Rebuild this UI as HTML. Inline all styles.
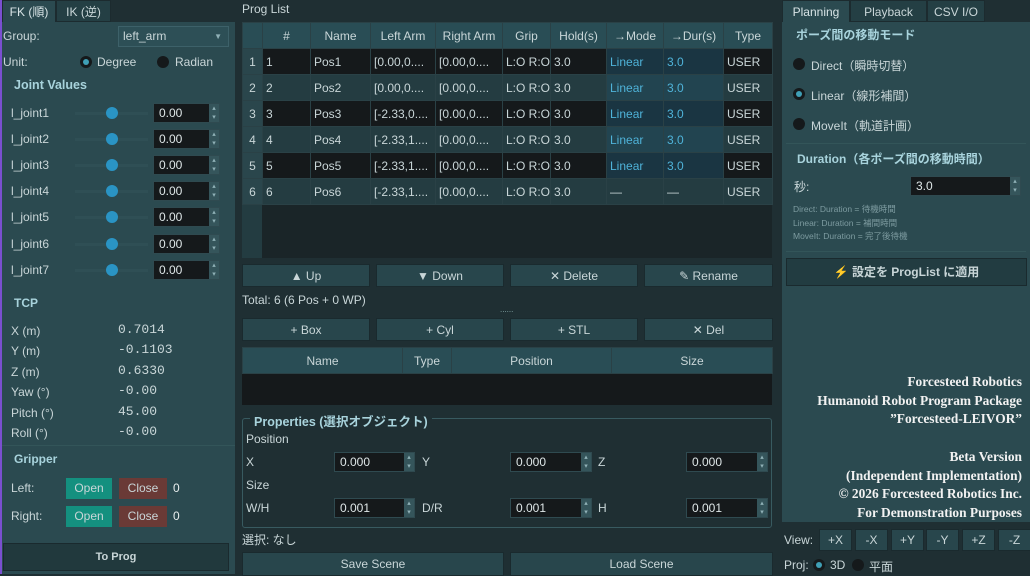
<!DOCTYPE html>
<html><head><meta charset="utf-8"><style>
*{box-sizing:border-box;margin:0;padding:0}
body{width:1030px;height:574px;overflow:hidden;background:#1f2f33;font-family:"Liberation Sans","Noto Sans CJK JP",sans-serif;font-size:12px;color:#c9d6d8;position:relative}
.a{position:absolute;white-space:nowrap}
.panel{background:#2b4a50}
.tab{position:absolute;top:0;height:22px;line-height:22px;text-align:center;font-size:12px;border:1px solid #1c2b2f}
.spin{position:absolute;background:#15191b;border:1px solid #2f4a50;height:20px;line-height:18px;padding-left:5px;color:#dfe7e8;font-size:12px}
.spin:after{content:"";position:absolute;right:0;top:0;width:10px;height:18px;background:#35555b}
.spin:before{content:"▴\A▾";white-space:pre;position:absolute;right:1px;top:0;width:8px;font-size:7px;line-height:9px;color:#8fb0b6;z-index:1;text-align:center}
.btn{position:absolute;background:#28464c;border:1px solid #1a2a2e;text-align:center;color:#c9d6d8;font-size:12px}
.h{color:#a8d3dc;font-weight:bold;font-size:12px}
.dot{position:absolute;width:12px;height:12px;border-radius:6px;background:#15191b}
.dot.on:after{content:"";position:absolute;left:3px;top:3px;width:6px;height:6px;border-radius:3px;background:#3f9fb5}
.knob{position:absolute;width:12px;height:12px;border-radius:6px;background:#2a94c4}
.track{position:absolute;height:3px;background:#2f4f55}
table{border-collapse:collapse;position:absolute;font-size:12px}
td{border:1px solid #2a4146;padding:0 3px;height:26px;white-space:nowrap;overflow:hidden}
.serif{font-family:"Liberation Serif",serif;font-weight:bold;color:#f2f2f2;font-size:13.4px;text-align:right;right:8px}
</style></head><body>
<div class="a" style="left:0;top:0;width:2px;height:574px;background:#7a4fd0"></div>
<!-- Left panel -->
<div class="a panel" style="left:2px;top:22px;width:233px;height:552px"></div>
<div class="tab panel" style="left:2px;width:54px;color:#d8e4e6;border-bottom:none">FK (順)</div>
<div class="tab" style="left:56px;width:55px;background:#243f44">IK (逆)</div>
<div class="a" style="left:3px;top:29px">Group:</div>
<div class="a" style="left:118px;top:26px;width:111px;height:21px;background:#2d4f56;border:1px solid #3d6169;padding-left:4px;line-height:19px">left_arm<span style="position:absolute;right:6px;top:0;font-size:8px;color:#8fb0b6">▼</span></div>
<div class="a" style="left:3px;top:55px">Unit:</div>
<div class="dot on" style="left:80px;top:56px"></div><div class="a" style="left:97px;top:55px">Degree</div>
<div class="dot" style="left:157px;top:56px"></div><div class="a" style="left:175px;top:55px">Radian</div>
<div class="a h" style="left:14px;top:78px;font-size:12.5px">Joint Values</div>
<div id="joints"></div>
<div class="a h" style="left:14px;top:296px">TCP</div>
<div class="a" style="left:11px;top:321px;line-height:20.4px">X (m)<br>Y (m)<br>Z (m)<br>Yaw (°)<br>Pitch (°)<br>Roll (°)</div>
<div class="a" style="left:118px;top:320px;line-height:20.4px;font-family:'Liberation Mono',monospace;font-size:13px">0.7014<br>-0.1103<br>0.6330<br>-0.00<br>45.00<br>-0.00</div>
<div class="a" style="left:2px;top:445px;width:233px;height:1px;background:#335559"></div>
<div class="a h" style="left:14px;top:452px">Gripper</div>
<div class="a" style="left:11px;top:481px">Left:</div>
<div class="a" style="left:11px;top:509px">Right:</div>
<div class="btn" style="left:66px;top:478px;width:46px;height:21px;line-height:20px;background:#14907f;border:none">Open</div>
<div class="btn" style="left:119px;top:478px;width:48px;height:21px;line-height:20px;background:#6a3a36;border:none">Close</div>
<div class="a" style="left:173px;top:481px;color:#e8eeee">0</div>
<div class="btn" style="left:66px;top:506px;width:46px;height:21px;line-height:20px;background:#14907f;border:none">Open</div>
<div class="btn" style="left:119px;top:506px;width:48px;height:21px;line-height:20px;background:#6a3a36;border:none">Close</div>
<div class="a" style="left:173px;top:509px;color:#e8eeee">0</div>
<div class="btn" style="left:3px;top:543px;width:226px;height:28px;line-height:27px;background:#21393d;font-weight:bold;font-size:11px">To Prog</div>
<div class="a" style="left:235px;top:22px;width:5px;height:552px;background:#1f2f33"></div>

<!-- Center -->
<div class="a" style="left:242px;top:2px">Prog List</div>
<div class="a" style="left:242px;top:22px;width:530px;height:236px;background:#1a2528"></div>
<div class="a" style="left:242px;top:22px;width:20px;height:236px;background:#233c41"></div>
<table style="left:242px;top:22px;width:530px;table-layout:fixed">
<colgroup><col style="width:20px"><col style="width:48px"><col style="width:60px"><col style="width:65px"><col style="width:67px"><col style="width:48px"><col style="width:56px"><col style="width:57px"><col style="width:60px"><col style="width:49px"></colgroup>
<tr style="background:#294d55;color:#c9d6d8;text-align:center"><td></td><td>#</td><td>Name</td><td>Left Arm</td><td>Right Arm</td><td>Grip</td><td>Hold(s)</td><td>→Mode</td><td>→Dur(s)</td><td>Type</td></tr>
<tbody id="rows"></tbody>
</table>
<div class="btn" style="left:242px;top:264px;width:128px;height:23px;line-height:22px">▲ Up</div>
<div class="btn" style="left:376px;top:264px;width:128px;height:23px;line-height:22px">▼ Down</div>
<div class="btn" style="left:510px;top:264px;width:128px;height:23px;line-height:22px">✕ Delete</div>
<div class="btn" style="left:644px;top:264px;width:129px;height:23px;line-height:22px">✎ Rename</div>
<div class="a" style="left:242px;top:293px">Total: 6 (6 Pos + 0 WP)</div>
<div class="a" style="left:500px;top:305px;font-size:8px;color:#8aa">......</div>
<div class="btn" style="left:242px;top:318px;width:128px;height:23px;line-height:22px">+ Box</div>
<div class="btn" style="left:376px;top:318px;width:128px;height:23px;line-height:22px">+ Cyl</div>
<div class="btn" style="left:510px;top:318px;width:128px;height:23px;line-height:22px">+ STL</div>
<div class="btn" style="left:644px;top:318px;width:129px;height:23px;line-height:22px">✕ Del</div>
<div class="a" style="left:242px;top:347px;width:530px;height:58px;background:#15191b"></div>
<table style="left:242px;top:347px;width:530px;table-layout:fixed"><colgroup><col style="width:160px"><col style="width:49px"><col style="width:160px"><col style="width:161px"></colgroup>
<tr style="background:#294d55;text-align:center"><td>Name</td><td>Type</td><td>Position</td><td>Size</td></tr></table>
<div class="a" style="left:242px;top:418px;width:530px;height:110px;border:1px solid #385a60;border-radius:3px"></div>
<div class="a h" style="left:250px;top:411px;background:#1f2f33;padding:0 4px;font-size:12.5px">Properties (選択オブジェクト)</div>
<div class="a" style="left:246px;top:432px">Position</div>
<div class="a" style="left:246px;top:455px">X</div><div class="a" style="left:422px;top:455px">Y</div><div class="a" style="left:598px;top:455px">Z</div>
<div class="spin" style="left:334px;top:452px;width:81px">0.000</div>
<div class="spin" style="left:510px;top:452px;width:82px">0.000</div>
<div class="spin" style="left:686px;top:452px;width:82px">0.000</div>
<div class="a" style="left:246px;top:478px">Size</div>
<div class="a" style="left:246px;top:501px">W/H</div><div class="a" style="left:422px;top:501px">D/R</div><div class="a" style="left:598px;top:501px">H</div>
<div class="spin" style="left:334px;top:498px;width:81px">0.001</div>
<div class="spin" style="left:510px;top:498px;width:82px">0.001</div>
<div class="spin" style="left:686px;top:498px;width:82px">0.001</div>
<div class="a" style="left:242px;top:531px">選択: なし</div>
<div class="btn" style="left:242px;top:552px;width:262px;height:24px;line-height:23px">Save Scene</div>
<div class="btn" style="left:510px;top:552px;width:263px;height:24px;line-height:23px">Load Scene</div>

<!-- Right -->
<div class="a panel" style="left:782px;top:22px;width:248px;height:500px"></div>
<div class="tab panel" style="left:782px;width:68px;border-bottom:none;color:#d8e4e6">Planning</div>
<div class="tab" style="left:850px;width:77px;background:#243f44">Playback</div>
<div class="tab" style="left:927px;width:58px;background:#243f44">CSV I/O</div>
<div class="a h" style="left:796px;top:26px">ポーズ間の移動モード</div>
<div class="dot" style="left:793px;top:58px"></div><div class="a" style="left:811px;top:57px">Direct（瞬時切替）</div>
<div class="dot on" style="left:793px;top:88px"></div><div class="a" style="left:811px;top:87px">Linear（線形補間）</div>
<div class="dot" style="left:793px;top:118px"></div><div class="a" style="left:811px;top:117px">MoveIt（軌道計画）</div>
<div class="a" style="left:786px;top:143px;width:240px;height:1px;background:#335559"></div>
<div class="a h" style="left:797px;top:150px">Duration（各ポーズ間の移動時間）</div>
<div class="a" style="left:794px;top:178px">秒:</div>
<div class="spin" style="left:910px;top:176px;width:111px">3.0</div>
<div class="a" style="left:793px;top:203px;font-size:8.5px;line-height:13.5px;color:#7d9ba0">Direct: Duration = 待機時間<br>Linear: Duration = 補間時間<br>MoveIt: Duration = 完了後待機</div>
<div class="a" style="left:786px;top:251px;width:240px;height:1px;background:#335559"></div>
<div class="btn" style="left:786px;top:258px;width:241px;height:28px;line-height:27px;background:#223c41;font-weight:bold">⚡ 設定を ProgList に適用</div>
<div class="a serif" style="top:373px;line-height:18.7px">Forcesteed Robotics<br>Humanoid Robot Program Package<br>”Forcesteed-LEIVOR”<br><br>Beta Version<br>(Independent Implementation)<br>© 2026 Forcesteed Robotics Inc.<br>For Demonstration Purposes</div>
<div class="a" style="left:784px;top:533px">View:</div>
<div class="btn" style="left:819px;top:529px;width:33px;height:22px;line-height:21px">+X</div>
<div class="btn" style="left:855px;top:529px;width:33px;height:22px;line-height:21px">-X</div>
<div class="btn" style="left:891px;top:529px;width:33px;height:22px;line-height:21px">+Y</div>
<div class="btn" style="left:926px;top:529px;width:33px;height:22px;line-height:21px">-Y</div>
<div class="btn" style="left:962px;top:529px;width:33px;height:22px;line-height:21px">+Z</div>
<div class="btn" style="left:998px;top:529px;width:33px;height:22px;line-height:21px">-Z</div>
<div class="a" style="left:784px;top:558px">Proj:</div>
<div class="dot on" style="left:813px;top:559px"></div><div class="a" style="left:830px;top:558px">3D</div>
<div class="dot" style="left:852px;top:559px"></div><div class="a" style="left:869px;top:558px">平面</div>

<script>
var j='';for(var i=0;i<7;i++){var y=113+i*26.1;
j+='<div class="a" style="left:11px;top:'+(y-7)+'px">l_joint'+(i+1)+'</div><div class="track" style="left:75px;top:'+(y-1)+'px;width:73px"></div><div class="knob" style="left:106px;top:'+(y-6)+'px"></div><div class="spin" style="left:153px;top:'+(y-10)+'px;width:67px">0.00</div>';}
document.getElementById('joints').innerHTML=j;
var la=['[0.00,0....','[0.00,0....','[-2.33,0....','[-2.33,1....','[-2.33,1....','[-2.33,1....'];
var r='';for(var i=0;i<6;i++){var d=i%2==0;var bg=d?'#15191b':'#243c41';var mb=d?'#1a3542':'#224450';var last=i==5;
r+='<tr style="background:'+bg+'"><td style="background:#2a464c;text-align:center">'+(i+1)+'</td><td>'+(i+1)+'</td><td>Pos'+(i+1)+'</td><td>'+la[i]+'</td><td>[0.00,0....</td><td>L:O R:O</td><td>3.0</td><td style="background:'+(last?bg:mb)+';color:'+(last?'#c9d6d8':'#4fb3d9')+'">'+(last?'—':'Linear')+'</td><td style="background:'+(last?bg:mb)+';color:'+(last?'#c9d6d8':'#4fb3d9')+'">'+(last?'—':'3.0')+'</td><td>USER</td></tr>';}
document.getElementById('rows').innerHTML=r;
</script>
</body></html>
